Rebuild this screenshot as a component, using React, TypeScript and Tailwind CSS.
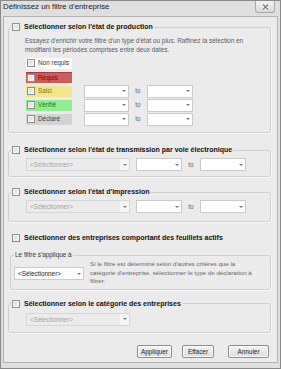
import clsx from "clsx";

function Check({ className }: { className?: string }) {
  return (
    <span
      className={clsx(
        "block h-[8px] w-[8px] shrink-0 border border-[#8e8f8f] bg-gradient-to-br from-[#d4d6d9] to-[#f8f8f8] shadow-[inset_0_0_0_1px_#f4f4f4]",
        className
      )}
    />
  );
}

function Arrow() {
  return (
    <svg width="4" height="2" viewBox="0 0 4 2">
      <path d="M0 0h4L2 2z" fill="#7a7a7a" />
    </svg>
  );
}

function Combo({ className, text, disabled }: { className: string; text?: string; disabled?: boolean }) {
  return (
    <div
      className={clsx(
        "flex h-[13px] shrink-0 border",
        disabled ? "border-[#d6d6d6] bg-[#ebebeb]" : "border-[#cacaca] bg-white",
        className
      )}
    >
      <span
        className={clsx(
          "flex-1 truncate pl-[3px] text-[6.4px] leading-[11px]",
          disabled ? "text-[#a3a3a3]" : "text-[#1e1e1e]"
        )}
      >
        {text}
      </span>
      <span className={clsx("flex w-[9px] items-center justify-center", disabled && "bg-[#f6f6f6]")}>
        <Arrow />
      </span>
    </div>
  );
}

function Legend({ children }: { children: string }) {
  return (
    <legend className="ml-[2px] px-[1px]">
      <div className="flex h-[10px] items-center gap-[4px]">
        <Check />
        <span className="whitespace-nowrap text-[7px] font-bold leading-[10px] text-[#111]">{children}</span>
      </div>
    </legend>
  );
}

const statuses = [
  { label: "Non requis", box: "bg-white", text: "text-[#333]", dates: false },
  { label: "Requis", box: "bg-[#cd5c5c] border-t border-[#b03a3a]", text: "text-[#7d0000]", dates: false },
  { label: "Saisi", box: "bg-[#f0e68c]", text: "text-[#8a7414]", dates: true },
  { label: "Vérifié", box: "bg-[#90ee90]", text: "text-[#137a13]", dates: true },
  { label: "Déclaré", box: "bg-[#d3d3d3]", text: "text-[#3c3c3c]", dates: true },
];

const box = "w-[263px] rounded-[3px] border border-[#d0d0d0] shadow-[1px_1px_0_#f8f8f8]";

export default function App() {
  return (
    <div className="h-[369px] w-[281px] border border-[#8a8a8a] bg-[#dfdfdf] font-['Liberation_Sans',Arial,sans-serif]">
      {/* Title bar */}
      <div className="flex h-[15px] items-start justify-between pl-[2px] pr-[5px]">
        <span className="text-[7.8px] leading-[12px] text-[#1b1b1b]">Définissez un filtre d'entreprise</span>
        <div className="flex h-[12px] w-[20px] items-center justify-center rounded-b-[3px] border border-t-0 border-[#a8a8a8] bg-gradient-to-b from-[#f3f3f3] to-[#d9d9d9]">
          <svg width="7" height="6" viewBox="0 0 7 6">
            <path d="M1 0.5l5 5M6 0.5l-5 5" stroke="#fff" strokeWidth="2.6" />
            <path d="M1 0.5l5 5M6 0.5l-5 5" stroke="#777" strokeWidth="1.3" />
          </svg>
        </div>
      </div>

      {/* Content */}
      <div className="ml-[2px] h-[347px] w-[275px] border border-[#b3b3b3] bg-[#ebebeb] pl-[4px] pt-[5px]">
        {/* Production */}
        <fieldset className={box}>
          <Legend>Sélectionner selon l'état de production</Legend>
          <div className="pb-[7px] pl-[16px]">
            <p className="mt-[4px] text-[6.4px] leading-[9px] text-[#5a5a5a]">
              Essayez d'enrichir votre filtre d'un type d'état ou plus. Raffinez la sélection en
              <br />
              modifiant les périodes comprises entre deux dates.
            </p>
            <div className="mt-[3px] flex flex-col gap-[2px] pl-[1px]">
              {statuses.map((s) => (
                <div key={s.label} className="flex h-[12px] items-center">
                  <div className={clsx("flex h-[11px] w-[46px] items-center gap-[3px] pl-[1px]", s.box)}>
                    <Check className="h-[7px] w-[7px]" />
                    <span className={clsx("text-[6.4px] leading-[10px]", s.text)}>{s.label}</span>
                  </div>
                  {s.dates && (
                    <div className="ml-[12px] flex items-center">
                      <Combo className="w-[45px]" />
                      <span className="w-[18px] text-center text-[6.4px] text-[#666]">to</span>
                      <Combo className="w-[46px]" />
                    </div>
                  )}
                </div>
              ))}
            </div>
          </div>
        </fieldset>

        {/* Transmission */}
        <fieldset className={clsx(box, "mt-[12px]")}>
          <Legend>Sélectionner selon l'état de transmission par voie électronique</Legend>
          <div className="mt-[3px] flex items-center pb-[5px] pl-[17px]">
            <Combo className="w-[104px]" text="<Sélectionner>" disabled />
            <Combo className="ml-[6px] w-[46px]" />
            <span className="w-[18px] text-center text-[6.4px] text-[#666]">to</span>
            <Combo className="w-[46px]" />
          </div>
        </fieldset>

        {/* Impression */}
        <fieldset className={clsx(box, "mt-[10px]")}>
          <Legend>Sélectionner selon l'état d'impression</Legend>
          <div className="mt-[3px] flex items-center pb-[8px] pl-[17px]">
            <Combo className="w-[104px]" text="<Sélectionner>" disabled />
            <Combo className="ml-[6px] w-[46px]" />
            <span className="w-[18px] text-center text-[6.4px] text-[#666]">to</span>
            <Combo className="w-[46px]" />
          </div>
        </fieldset>

        {/* Feuillets actifs */}
        <div className="ml-[4px] mt-[11px] flex h-[10px] items-center gap-[4px]">
          <Check />
          <span className="text-[7px] font-bold leading-[10px] text-[#111]">
            Sélectionner des entreprises comportant des feuillets actifs
          </span>
        </div>
        <fieldset className="ml-[2px] mt-[7px] w-[261px] rounded-[3px] border border-[#d0d0d0] shadow-[1px_1px_0_#f8f8f8]">
          <legend className="ml-[3px] px-[1px] text-[6.4px] leading-[10px] text-[#333]">Le filtre s'applique à</legend>
          <div className="flex items-start pb-[3px] pl-[3px]">
            <Combo className="mt-[7px] w-[70px]" text="<Sélectionner>" />
            <p className="ml-[6px] text-[6.2px] leading-[8.5px] text-[#666]">
              Si le filtre est déterminé selon d'autres critères que la
              <br />
              catégorie d'entreprise, sélectionner le type de déclaration à
              <br />
              filtrer.
            </p>
          </div>
        </fieldset>

        {/* Catégorie */}
        <fieldset className={clsx(box, "mt-[9px]")}>
          <Legend>Sélectionner selon le catégorie des entreprises</Legend>
          <div className="mt-[4px] pb-[6px] pl-[17px]">
            <Combo className="w-[104px]" text="<Sélectionner>" disabled />
          </div>
        </fieldset>

        {/* Buttons */}
        <div className="mt-[12px] flex justify-end pr-[8px]">
          {[
            { label: "Appliquer", w: "w-[35px]" },
            { label: "Effacer", w: "ml-[10px] w-[32px]" },
            { label: "Annuler", w: "ml-[14px] w-[41px]" },
          ].map((b) => (
            <button
              key={b.label}
              className={clsx(
                "h-[13px] rounded-[2px] border border-[#8d8d8d] bg-gradient-to-b from-[#f4f4f4] to-[#dcdcdc] text-[6.4px] leading-[11px] text-[#222] shadow-[inset_0_0_0_1px_#fbfbfb]",
                b.w
              )}
            >
              {b.label}
            </button>
          ))}
        </div>
      </div>
    </div>
  );
}
